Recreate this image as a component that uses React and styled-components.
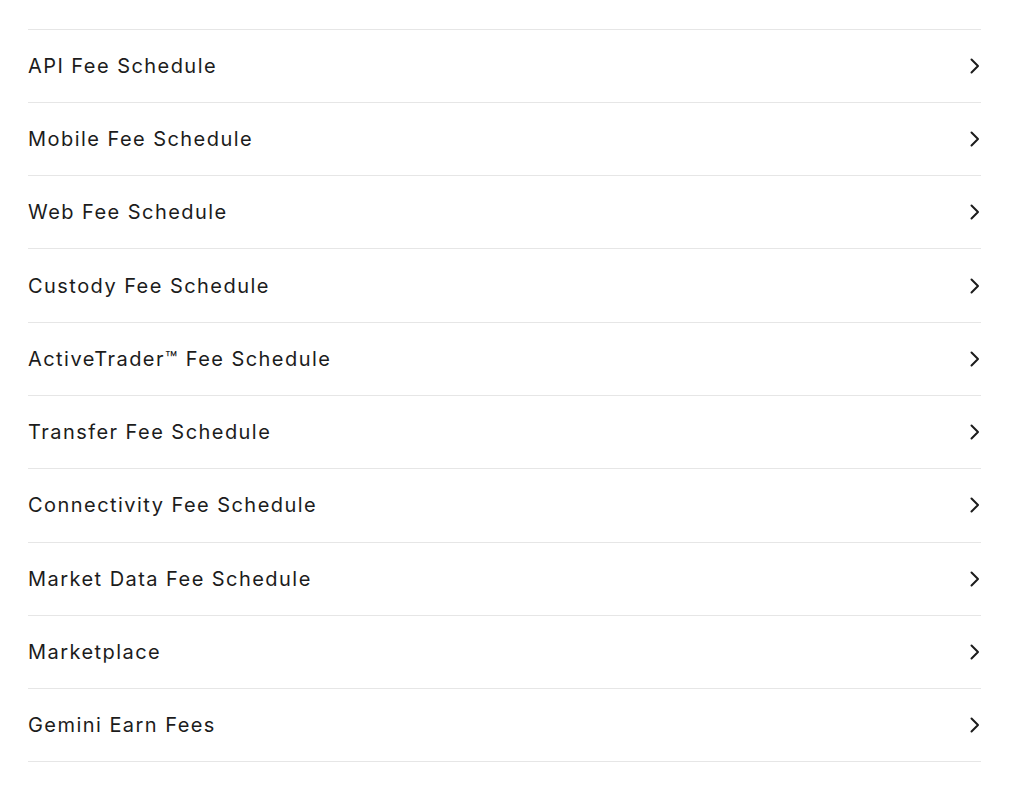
import React from 'react'
import styled, { createGlobalStyle } from 'styled-components'

const GlobalStyle = createGlobalStyle`
  html, body {
    margin: 0;
    padding: 0;
    background: #ffffff;
  }
  body {
    font-family: Inter, "Noto Sans", sans-serif;
    color: #1c1c1c;
  }
`

const Page = styled.div`
  padding: 28.5px 43px 0 28px;
`

const List = styled.ul`
  list-style: none;
  margin: 0;
  padding: 0;
  border-top: 1px solid #e6e6e6;
`

const Row = styled.li`
  box-sizing: border-box;
  height: 73.3px;
  border-bottom: 1px solid #e6e6e6;
  display: flex;
  align-items: center;
  justify-content: space-between;
  cursor: pointer;
`

const Label = styled.span`
  font-size: 20px;
  line-height: 24px;
  font-weight: 400;
  letter-spacing: 1.45px;
`

const Chevron = styled.svg`
  width: 10px;
  height: 16px;
  margin-right: 1px;
  flex-shrink: 0;
`

const items = [
  'API Fee Schedule',
  'Mobile Fee Schedule',
  'Web Fee Schedule',
  'Custody Fee Schedule',
  'ActiveTrader™ Fee Schedule',
  'Transfer Fee Schedule',
  'Connectivity Fee Schedule',
  'Market Data Fee Schedule',
  'Marketplace',
  'Gemini Earn Fees',
]

export default function App() {
  return (
    <Page>
      <GlobalStyle />
      <List>
        {items.map((item) => (
          <Row key={item}>
            <Label>{item}</Label>
            <Chevron viewBox="0 0 10 16" fill="none">
              <path d="M1.5 1.5 L8 8 L1.5 14.5" stroke="#1c1c1c" strokeWidth="2" strokeLinecap="round" strokeLinejoin="round" />
            </Chevron>
          </Row>
        ))}
      </List>
    </Page>
  )
}
